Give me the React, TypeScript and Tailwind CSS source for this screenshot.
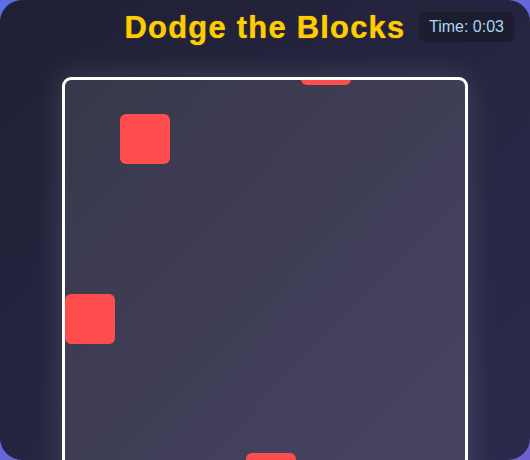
import React from "react";

const blocks = [
  { left: 55, top: 34 },
  { left: 0, top: 214 },
  { left: 236, top: -45 },
  { left: 181, top: 373 },
];

export default function App() {
  return (
    <div className="w-[530px] h-[460px] overflow-hidden bg-gradient-to-br from-[#5b6ee6] to-[#7060d0]">
      <div
        className="relative w-[530px] h-[460px] rounded-[22px] bg-gradient-to-br from-[#1f1f35] to-[#2c2a4c] flex flex-col items-center overflow-hidden"
        style={{ fontFamily: '"Liberation Sans", Arial, sans-serif' }}
      >
        <div className="absolute top-[12px] right-[16px] rounded-[6px] bg-[#1d1d30] px-[10px] h-[30px] flex items-center text-[16px] text-[#a9d6ee]">
          Time: 0:03
        </div>
        <h1 className="mt-[9px] text-[31px] leading-[37px] font-bold tracking-[1.2px] text-[#ffcc00] [text-shadow:0_0_1px_rgba(255,204,0,0.8)]">
          Dodge the Blocks
        </h1>
        <div className="mt-[31px] relative w-[406px] h-[420px] shrink-0 rounded-[9px] border-[3px] border-white bg-gradient-to-br from-[#38384c] to-[#474462] overflow-hidden shadow-[0_0_30px_rgba(255,255,255,0.15)]">
          {blocks.map((b, i) => (
            <div
              key={i}
              className="absolute w-[50px] h-[50px] rounded-[6px] bg-[#ff4d4d]"
              style={{ left: b.left, top: b.top }}
            />
          ))}
        </div>
      </div>
    </div>
  );
}
